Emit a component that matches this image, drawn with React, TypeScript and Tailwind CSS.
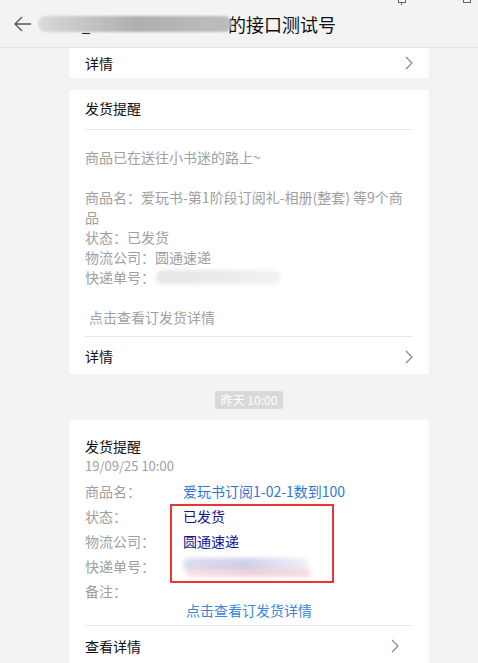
import React from "react";

const font = {
  fontFamily: '"Microsoft YaHei", "Noto Sans CJK SC", "Noto Sans", sans-serif',
};

const Chevron = ({ className = "" }: { className?: string }) => (
  <svg
    width="8"
    height="14"
    viewBox="0 0 8 14"
    className={className}
    fill="none"
    stroke="#888"
    strokeWidth="1.2"
  >
    <path d="M1 1 L7 7 L1 13" />
  </svg>
);

const Blur = ({ className = "" }: { className?: string }) => (
  <div className={`rounded-full blur-[2px] ${className}`} />
);

export default function App() {
  return (
    <div
      className="relative w-[478px] h-[663px] overflow-hidden bg-[#f3f3f3]"
      style={font}
    >
      {/* Header */}
      <div className="relative h-[48px] border-b border-[#e3e3e3] flex items-center pl-[14px]">
        <svg width="18" height="16" viewBox="0 0 18 16" fill="none" stroke="#555" strokeWidth="1.3">
          <path d="M8 1 L1 8 L8 15 M1 8 H17" />
        </svg>
        <div className="relative ml-[6px] flex items-center">
          <div className="w-[194px] h-[16px] rounded-full bg-gradient-to-r from-[#d8d8d6] via-[#a9a9a9] to-[#b9b8b6] opacity-90 blur-[1px]" />
          <span className="-ml-[4px] text-[18px] text-[#111] leading-none">的接口测试号</span>
          <div className="absolute left-[44px] top-[18px] w-[8px] h-[1.5px] bg-[#222]" />
        </div>
        {/* window control fragments */}
        <div className="absolute left-[398px] -top-[3px] w-[8px] h-[6px] border border-[#666] border-t-0" />
        <div className="absolute left-[401px] top-[2px] w-[1px] h-[3px] bg-[#666]" />
        <div className="absolute left-[463px] -top-[2px] w-[8px] h-[5px] border border-[#666]" />
      </div>

      <div className="flex flex-col items-center pl-[20px]">
        {/* Card 1 (cut off) */}
        <div className="w-[360px] h-[30px] bg-white rounded-b-[3px] flex items-center justify-between pl-[16px] pr-[16px]">
          <span className="text-[14px] text-[#111]">详情</span>
          <Chevron />
        </div>

        {/* Card 2 */}
        <div className="mt-[12px] w-[360px] bg-white rounded-[3px] px-[16px]">
          <div className="h-[40px] flex items-end pb-[10px] border-b border-[#e8e8e8]">
            <span className="text-[14px] text-[#111]">发货提醒</span>
          </div>
          <div className="pt-[17px] text-[14px] leading-[20px] text-[#a0a0a0]">
            <div>商品已在送往小书迷的路上~</div>
            <div className="h-[20px]" />
            <div className="pr-[4px]">商品名：爱玩书-第1阶段订阅礼-相册(整套) 等9个商品</div>
            <div>状态：已发货</div>
            <div>物流公司：圆通速递</div>
            <div className="flex items-center">
              快递单号：
              <Blur className="ml-[1px] w-[125px] h-[14px] bg-gradient-to-r from-[#e6e6e6] via-[#eaeaea] to-[#f2f2f2]" />
            </div>
            <div className="h-[20px]" />
            <div className="pl-[4px]">点击查看订发货详情</div>
          </div>
          <div className="mt-[9px] h-[38px] border-t border-[#e8e8e8] flex items-center justify-between pt-[2px]">
            <span className="text-[14px] text-[#111]">详情</span>
            <Chevron />
          </div>
        </div>

        {/* Time badge */}
        <div className="mt-[17px] h-[18px] px-[6px] rounded-[2px] bg-[#d9d9d9] text-white text-[12px] leading-[18px]">
          昨天 10:00
        </div>

        {/* Card 3 */}
        <div className="relative mt-[11px] w-[360px] bg-white rounded-[3px] px-[16px] pt-[17px]">
          <div className="text-[14px] leading-[18px] text-[#111]">发货提醒</div>
          <div className="text-[13px] leading-[18px] text-[#a0a0a0] mt-[2px]">19/09/25 10:00</div>
          <div className="mt-[4px] text-[14px] leading-[25px]">
            <div className="flex">
              <span className="w-[98px] text-[#a0a0a0]">商品名：</span>
              <span className="text-[#2f78d0]">爱玩书订阅1-02-1数到100</span>
            </div>
            <div className="flex">
              <span className="w-[98px] text-[#a0a0a0]">状态：</span>
              <span className="text-[#14148f]">已发货</span>
            </div>
            <div className="flex">
              <span className="w-[98px] text-[#a0a0a0]">物流公司：</span>
              <span className="text-[#14148f]">圆通速递</span>
            </div>
            <div className="flex items-center">
              <span className="w-[98px] text-[#a0a0a0]">快递单号：</span>
              <div className="relative w-[130px] h-[20px]">
                <Blur className="absolute left-0 top-[1px] w-[125px] h-[14px] bg-gradient-to-r from-[#dcdcf0] via-[#cfcfe9] to-[#f0f0fa]" />
                <Blur className="absolute left-[4px] top-[12px] w-[124px] h-[8px] bg-gradient-to-r from-[#f6dcdf] via-[#f0c9cf] to-[#f2d3d7] opacity-80" />
              </div>
            </div>
            <div className="flex">
              <span className="w-[98px] text-[#a0a0a0]">备注：</span>
            </div>
          </div>
          <div className="text-center text-[14px] leading-[18px] text-[#3a87d8] -mt-[3px] pb-[6px] border-b border-[#e8e8e8]">
            点击查看订发货详情
          </div>
          <div className="h-[40px] flex items-center justify-between pr-[14px]">
            <span className="text-[14px] text-[#111]">查看详情</span>
            <Chevron />
          </div>

          {/* red highlight box */}
          <div className="absolute left-[101px] top-[84px] w-[164px] h-[79px] border-[2px] border-[#ee3333]" />
        </div>
      </div>
    </div>
  );
}
